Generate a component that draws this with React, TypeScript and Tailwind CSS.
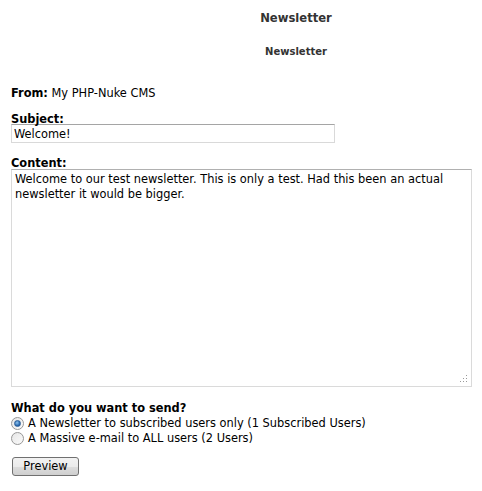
import React from 'react'

const font = { fontFamily: '"DejaVu Sans", Verdana, sans-serif' }

const Radio = ({ checked }: { checked?: boolean }) => (
  <span className="relative flex items-center justify-center shrink-0 w-[13px] h-[13px] rounded-full border border-[#979797] bg-gradient-to-br from-[#e6e6e6] to-[#fbfbfb]">
    {checked && (
      <span className="w-[7px] h-[7px] rounded-full bg-[radial-gradient(circle_at_40%_35%,#8ec4f0,#1f5fa8_70%)] border border-[#2b5f99]" />
    )}
  </span>
)

const App = () => {
  return (
    <div className="w-[482px] h-[491px] bg-white text-[11.4px] text-black overflow-hidden" style={font}>
      <div className="w-[592px]">
        <div className="text-center font-bold text-[11.6px] text-[#333] pt-[10px] leading-[16px]">Newsletter</div>
        <div className="text-center font-bold text-[10px] text-[#333] mt-[19px] leading-[14px]">Newsletter</div>
      </div>

      <div className="px-[11px] pt-[27px]">
        <div className="leading-[15px]">
          <b>From:</b> My PHP-Nuke CMS
        </div>

        <div className="mt-[9px] pt-[3px] font-bold leading-[12px]">Subject:</div>
        <input
          type="text"
          defaultValue="Welcome!"
          className="block w-[324px] h-[19px] -mt-[1px] border border-[#d9d9d9] border-t-[#a5a5a5] px-[2px] text-[11.4px] outline-none"
          style={font}
        />

        <div className="mt-[11px] pt-[4px] font-bold leading-[11px]">Content:</div>
        <div className="relative w-[461px]">
          <textarea
            defaultValue="Welcome to our test newsletter. This is only a test. Had this been an actual newsletter it would be bigger."
            className="block w-[461px] h-[218px] border border-[#dadada] border-t-[#b0b0b0] px-[3px] py-[2px] text-[11.4px] leading-[15px] outline-none resize-none"
            style={font}
          />
          <svg className="absolute right-[4px] bottom-[4px]" width="8" height="8" viewBox="0 0 8 8">
            <rect x="6" y="0" width="1" height="1" fill="#9a9a9a" />
            <rect x="3" y="3" width="1" height="1" fill="#9a9a9a" />
            <rect x="6" y="3" width="1" height="1" fill="#9a9a9a" />
            <rect x="0" y="6" width="1" height="1" fill="#9a9a9a" />
            <rect x="3" y="6" width="1" height="1" fill="#9a9a9a" />
            <rect x="6" y="6" width="1" height="1" fill="#9a9a9a" />
          </svg>
        </div>

        <div className="mt-[14px] font-bold leading-[15px]">What do you want to send?</div>
        <label className="flex items-center gap-[4px] leading-[15px]">
          <Radio checked />
          A Newsletter to subscribed users only (1 Subscribed Users)
        </label>
        <label className="flex items-center gap-[4px] leading-[15px]">
          <Radio />
          A Massive e-mail to ALL users (2 Users)
        </label>

        <button
          className="block mt-[11px] ml-[1px] w-[67px] h-[19px] border border-[#707070] rounded-[3px] bg-[linear-gradient(#f2f2f2,#ebebeb_50%,#dddddd_51%,#cfcfcf)] text-[11.4px] leading-[15px]"
          style={font}
        >
          Preview
        </button>
      </div>
    </div>
  )
}

export default App
